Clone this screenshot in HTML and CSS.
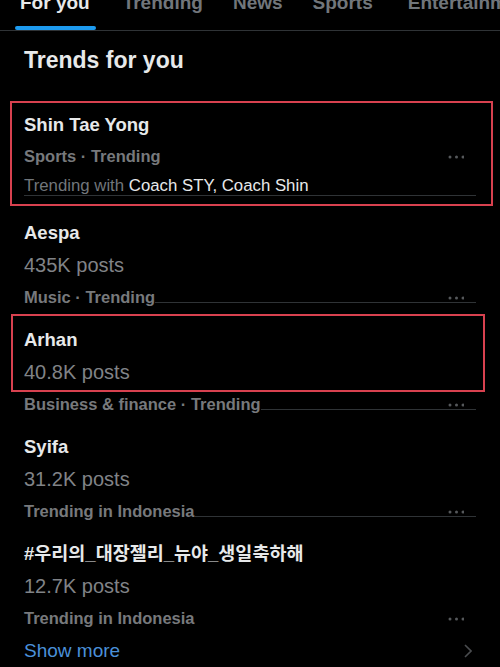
FILE: index.html
```html
<!DOCTYPE html>
<html>
  <head>
    <title>Explore - Trends for you</title>
    <link rel="stylesheet" href="styles.css">
  </head>
  <body>
    <nav class="tabs">
      <span class="tab active">For you</span>
      <span class="tab">Trending</span>
      <span class="tab">News</span>
      <span class="tab">Sports</span>
      <span class="tab tab-last">Entertainment</span>
    </nav>

    <h1 class="heading">Trends for you</h1>

    <div class="trends">
      <div class="trend hl hl-first">
        <div class="t-title">Shin Tae Yong</div>
        <div class="t-row">
          <span class="t-cat">Sports · Trending</span>
          <svg class="dots" viewBox="0 0 16 4" width="16" height="4"><circle cx="2" cy="2" r="1.5"/><circle cx="8.5" cy="2" r="1.5"/><circle cx="15" cy="2" r="1.5"/></svg>
        </div>
        <div class="t-context">Trending with <span class="hi">Coach STY, Coach Shin</span></div>
        <div class="sep sep-context"></div>
      </div>

      <div class="trend">
        <div class="t-title">Aespa</div>
        <div class="t-posts">435K posts</div>
        <div class="t-row">
          <span class="t-cat">Music · Trending</span>
          <svg class="dots" viewBox="0 0 16 4" width="16" height="4"><circle cx="2" cy="2" r="1.5"/><circle cx="8.5" cy="2" r="1.5"/><circle cx="15" cy="2" r="1.5"/></svg>
        </div>
        <div class="sep"></div>
      </div>

      <div class="trend">
        <div class="hl hl-second">
          <div class="t-title">Arhan</div>
          <div class="t-posts">40.8K posts</div>
        </div>
        <div class="t-row">
          <span class="t-cat">Business &amp; finance · Trending</span>
          <svg class="dots" viewBox="0 0 16 4" width="16" height="4"><circle cx="2" cy="2" r="1.5"/><circle cx="8.5" cy="2" r="1.5"/><circle cx="15" cy="2" r="1.5"/></svg>
        </div>
        <div class="sep"></div>
      </div>

      <div class="trend">
        <div class="t-title">Syifa</div>
        <div class="t-posts">31.2K posts</div>
        <div class="t-row">
          <span class="t-cat">Trending in Indonesia</span>
          <svg class="dots" viewBox="0 0 16 4" width="16" height="4"><circle cx="2" cy="2" r="1.5"/><circle cx="8.5" cy="2" r="1.5"/><circle cx="15" cy="2" r="1.5"/></svg>
        </div>
        <div class="sep"></div>
      </div>

      <div class="trend trend-last">
        <div class="t-title">#우리의_대장젤리_뉴야_생일축하해</div>
        <div class="t-posts">12.7K posts</div>
        <div class="t-row">
          <span class="t-cat">Trending in Indonesia</span>
          <svg class="dots" viewBox="0 0 16 4" width="16" height="4"><circle cx="2" cy="2" r="1.5"/><circle cx="8.5" cy="2" r="1.5"/><circle cx="15" cy="2" r="1.5"/></svg>
        </div>
      </div>

      <div class="show-more">
        <span>Show more</span>
        <svg class="chevron" viewBox="0 0 8 14" width="8" height="14"><path d="M1 1l6 6-6 6"/></svg>
      </div>
    </div>
  </body>
</html>
```

FILE: styles.css
```css
  /* page */
  body {
    margin: 0;
    background-color: #000;
    color: #e7e9ea;
    font-family: "Liberation Sans", Arial, "Noto Sans CJK KR", sans-serif;
    overflow: hidden;
  }

  /* top tab bar */
  .tabs {
    display: flex;
    align-items: flex-end;
    height: 30px;
    padding-left: 5px;
    border-bottom: 1px solid #2f3336;
    white-space: nowrap;
    overflow: hidden;
  }
  .tab {
    position: relative;
    padding: 0 15px 15px;
    font-size: 19px;
    font-weight: bold;
    line-height: 24px;
    color: #71767b;
  }
  .tab:nth-child(2) {
    padding-left: 18px;
  }
  .tab-last {
    padding-left: 20px;
  }
  .tab.active {
    color: #e7e9ea;
  }
  .tab.active::after {
    content: "";
    position: absolute;
    left: 10px;
    right: 9px;
    bottom: 0;
    height: 4px;
    border-radius: 2px;
    background-color: #1d9bf0;
  }

  .heading {
    margin: 15px 0 34px;
    padding: 0 24px;
    font-size: 23px;
    line-height: 28px;
    font-weight: bold;
  }

  /* trend list */
  .trends {
    padding: 0 24px;
  }
  .trend {
    margin-bottom: 20px;
  }
  .trend-last {
    margin-bottom: 0;
  }
  .t-title {
    font-size: 18.5px;
    font-weight: bold;
    line-height: 33px;
    white-space: nowrap;
  }
  .t-posts {
    font-size: 20px;
    line-height: 33px;
    color: #808387;
  }
  .t-row {
    position: relative;
    z-index: 1;
    display: flex;
    align-items: center;
    justify-content: space-between;
    height: 31px;
  }
  .t-cat {
    font-size: 16.5px;
    font-weight: bold;
    line-height: 31px;
    color: #77797c;
    background-color: #000;
  }
  .t-context {
    font-size: 16.8px;
    line-height: 28px;
    color: #71767b;
  }
  .t-context .hi {
    color: #e7e9ea;
  }
  .dots {
    margin-right: 12px;
    fill: #55585b;
  }
  .sep {
    height: 1px;
    margin-top: -11px;
    background-color: #2f3336;
  }
  .sep-context {
    margin-top: -5px;
  }

  /* red annotation boxes drawn over the screenshot */
  .hl {
    position: relative;
  }
  .hl::after {
    content: "";
    position: absolute;
    z-index: 2;
    border: 2px solid #d8414f;
    pointer-events: none;
  }
  .hl-first::after {
    top: -7px;
    bottom: -10px;
    left: -14px;
    right: -17px;
  }
  .hl-second::after {
    top: -9px;
    bottom: -3px;
    left: -13px;
    right: -9px;
  }

  .show-more {
    display: flex;
    align-items: center;
    justify-content: space-between;
    height: 33px;
    font-size: 19px;
    color: #4a90d9;
  }
  .chevron {
    margin-right: 4px;
    fill: none;
    stroke: #4a4c4f;
    stroke-width: 1.6;
  }
```
